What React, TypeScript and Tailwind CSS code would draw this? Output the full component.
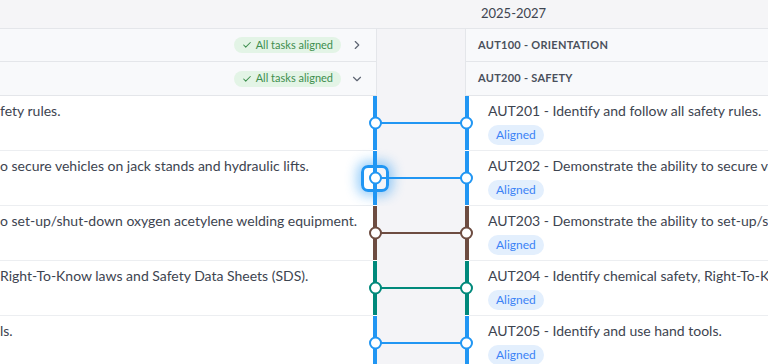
import React from 'react';
import { Check, ChevronRight, ChevronDown } from 'lucide-react';

type Row = {
  code: string;
  title: string;
  leftText: string;
  color: string;
  focused?: boolean;
};

const rows: Row[] = [
  {
    code: 'AUT201',
    title: 'Identify and follow all safety rules.',
    leftText: 'fety rules.',
    color: '#2196f3',
  },
  {
    code: 'AUT202',
    title: 'Demonstrate the ability to secure vehicles on jack stands and hydraulic lifts.',
    leftText: 'o secure vehicles on jack stands and hydraulic lifts.',
    color: '#2196f3',
    focused: true,
  },
  {
    code: 'AUT203',
    title: 'Demonstrate the ability to set-up/shut-down oxygen acetylene welding equipment.',
    leftText: 'o set-up/shut-down oxygen acetylene welding equipment.',
    color: '#6d4c41',
  },
  {
    code: 'AUT204',
    title: 'Identify chemical safety, Right-To-Know laws and Safety Data Sheets (SDS).',
    leftText: 'Right-To-Know laws and Safety Data Sheets (SDS).',
    color: '#00897b',
  },
  {
    code: 'AUT205',
    title: 'Identify and use hand tools.',
    leftText: 'ls.',
    color: '#2196f3',
  },
];

const AlignedPill = () => (
  <span className="inline-flex h-4 items-center gap-1 rounded-full bg-[#e3f4e6] px-[8px] text-[11px] text-[#3e8e4e]">
    <Check size={10} strokeWidth={2.5} />
    All tasks aligned
  </span>
);

const GroupRow = ({ label, open, tall }: { label: string; open?: boolean; tall?: boolean }) => (
  <div className={`grid grid-cols-[377px_88px_1fr] ${tall ? 'h-[34px]' : 'h-[33px]'}`}>
    <div className="flex items-center justify-end gap-[9px] border-r border-b border-[#e4e6ea] bg-[#f8f9fb] pr-[12px]">
      <AlignedPill />
      {open ? (
        <ChevronDown size={14} className="text-[#5f6673]" />
      ) : (
        <ChevronRight size={14} className="text-[#5f6673]" />
      )}
    </div>
    <div className="bg-[#f4f4f7]" />
    <div className="flex items-center border-l border-b border-[#e4e6ea] bg-[#f8f9fb] pl-3 text-[11px] font-bold tracking-wide text-[#4a505c]">
      {label}
    </div>
  </div>
);

const OutcomeRow = ({ row }: { row: Row }) => (
  <div className="relative grid h-[55px] grid-cols-[377px_88px_1fr]">
    <div className="flex">
      <div className="flex-1 overflow-hidden border-b border-[#eceef1] bg-white pt-[5px]">
        <p className="whitespace-nowrap text-sm leading-5 text-[#3d4450]">{row.leftText}</p>
      </div>
      <div className="w-1 border-b border-white" style={{ backgroundColor: row.color }} />
    </div>
    <div className="bg-[#f4f4f7]" />
    <div className="flex">
      <div className="w-1 border-b border-white" style={{ backgroundColor: row.color }} />
      <div className="flex-1 overflow-hidden border-b border-[#eceef1] bg-white pt-[5px] pl-[19px]">
        <p className="whitespace-nowrap text-sm leading-5 text-[#3d4450]">
          {row.code} - {row.title}
        </p>
        <span className="mt-[4px] inline-flex h-5 items-center rounded-full bg-[#e3effd] px-2 text-xs text-[#3b82f6]">
          Aligned
        </span>
      </div>
    </div>

    {/* connector between the two timelines */}
    <svg
      className="absolute top-[20px] left-[368px]"
      width="106"
      height="14"
      viewBox="0 0 106 14"
    >
      <line x1="13" y1="7" x2="93" y2="7" stroke={row.color} strokeWidth="2" />
      <circle cx="7.5" cy="7" r="5.5" fill="white" stroke={row.color} strokeWidth="2" />
      <circle cx="98.5" cy="7" r="5.5" fill="white" stroke={row.color} strokeWidth="2" />
    </svg>

    {row.focused && (
      <div className="absolute top-[14px] left-[361px] h-[27px] w-[28px] rounded-[7px] border-[3px] border-[#2196f3] shadow-[0_0_12px_4px_rgba(33,150,243,0.45)]" />
    )}
  </div>
);

export default function App() {
  return (
    <div className="h-[364px] w-[768px] overflow-hidden bg-white font-['Lato',sans-serif]">
      <div className="grid h-[29px] grid-cols-[377px_88px_1fr] border-b border-[#e4e6ea] bg-[#f5f5f7]">
        <div />
        <div />
        <div className="flex items-center pl-4 text-[13px] text-[#3d4450]">2025-2027</div>
      </div>
      <GroupRow label="AUT100 - ORIENTATION" />
      <GroupRow label="AUT200 - SAFETY" open tall />
      {rows.map((r) => (
        <OutcomeRow key={r.code} row={r} />
      ))}
    </div>
  );
}
